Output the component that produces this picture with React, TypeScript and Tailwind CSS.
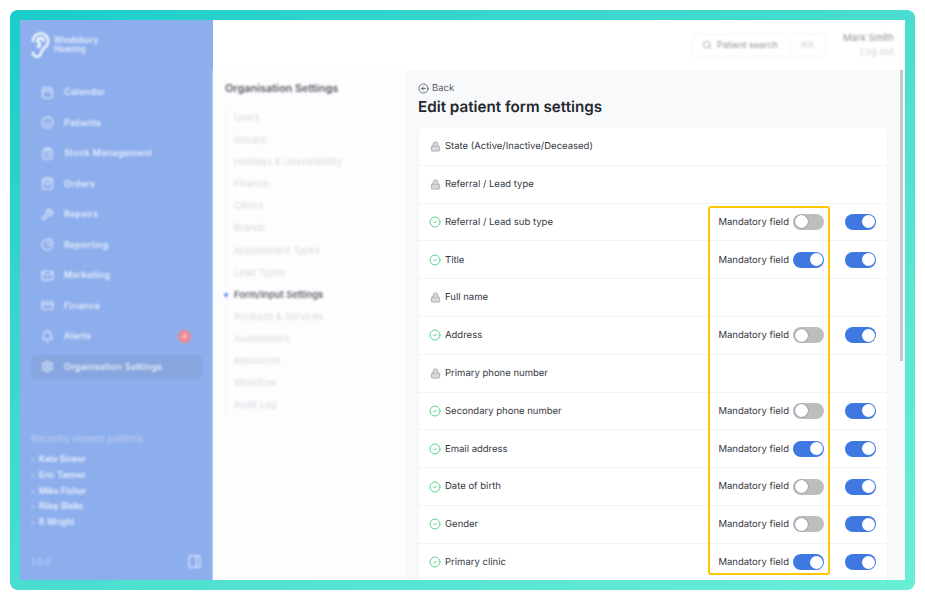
import React from 'react';
import {
  Bell,
  Calendar,
  CircleArrowLeft,
  CircleCheck,
  ClipboardList,
  CreditCard,
  Ear,
  Lock,
  Mail,
  PanelRight,
  PieChart,
  Search,
  Settings,
  ShoppingBag,
  Smile,
  Wrench,
} from 'lucide-react';

const navItems = [
  { label: 'Calendar', icon: Calendar },
  { label: 'Patients', icon: Smile },
  { label: 'Stock Management', icon: ClipboardList },
  { label: 'Orders', icon: ShoppingBag },
  { label: 'Repairs', icon: Wrench },
  { label: 'Reporting', icon: PieChart },
  { label: 'Marketing', icon: Mail },
  { label: 'Finance', icon: CreditCard },
  { label: 'Alerts', icon: Bell, badge: '4' },
  { label: 'Organisation Settings', icon: Settings, active: true },
];

const recentPatients = ['Kate Bower', 'Eric Tanner', 'Mike Fisher', 'Riley Blake', 'R Wright'];

const settingsLinks = [
  'Users',
  'Groups',
  'Holidays & Unavailability',
  'Finance',
  'Clinics',
  'Brands',
  'Appointment Types',
  'Lead Types',
  'Form/Input Settings',
  'Products & Services',
  'Audiometers',
  'Resources',
  'Workflow',
  'Audit Log',
];

const fields: { label: string; locked?: boolean; mandatory?: boolean }[] = [
  { label: 'State (Active/Inactive/Deceased)', locked: true },
  { label: 'Referral / Lead type', locked: true },
  { label: 'Referral / Lead sub type', mandatory: false },
  { label: 'Title', mandatory: true },
  { label: 'Full name', locked: true },
  { label: 'Address', mandatory: false },
  { label: 'Primary phone number', locked: true },
  { label: 'Secondary phone number', mandatory: false },
  { label: 'Email address', mandatory: true },
  { label: 'Date of birth', mandatory: false },
  { label: 'Gender', mandatory: false },
  { label: 'Primary clinic', mandatory: true },
];

const Toggle = ({ on }: { on: boolean }) => (
  <div
    className={`flex h-[16px] w-[31px] items-center rounded-full p-[1.5px] ${
      on ? 'justify-end bg-[#3f78e0]' : 'justify-start bg-[#bdbdbd]'
    }`}
  >
    <div className={`h-[13px] w-[13px] rounded-full bg-white ${on ? '' : 'shadow-[0_0_0_0.5px_#8a8a8a]'}`} />
  </div>
);

const Sidebar = () => (
  <aside className="flex w-[193px] shrink-0 flex-col bg-[#8daeed] text-white">
    <div className="flex h-[50px] shrink-0 items-center pl-[6px] blur-[1px]">
      <Ear size={28} strokeWidth={2} />
      <div className="text-[8.3px] font-semibold leading-[9px] text-white/80">
        Windsbury
        <br />
        Hearing
      </div>
    </div>
    <nav className="flex flex-col px-[11px] pt-[10px] blur-[1.2px]">
      {navItems.map((item) => (
        <div
          key={item.label}
          className={`mb-[6.5px] flex h-[24px] items-center gap-[10px] rounded pl-[10px] ${
            item.active ? 'bg-[#87a5de]' : ''
          }`}
        >
          <item.icon size={13} strokeWidth={2} className="shrink-0 text-white/80" />
          <span className="text-[9px] font-medium tracking-[0.3px] text-white/90">{item.label}</span>
          {item.badge && (
            <span className="ml-auto mr-[11px] flex h-[13px] w-[13px] items-center justify-center rounded-full bg-[#ef8a92] text-[6px]">
              {item.badge}
            </span>
          )}
        </div>
      ))}
    </nav>
    <div className="mt-[47px] pl-[11px] blur-[1.2px]">
      <div className="text-[9.5px] text-white/40">Recently viewed patients</div>
      <ul className="mt-[6px]">
        {recentPatients.map((name) => (
          <li key={name} className="h-[15.7px] text-[8.5px] font-semibold leading-[15.7px] text-white/80">
            <span className="mr-[4px]">-</span>
            {name}
          </li>
        ))}
      </ul>
    </div>
    <div className="mt-auto flex items-center justify-between pb-[11px] pl-[11px] pr-[11px] blur-[1px]">
      <span className="text-[9px] text-white/40">1.0.0</span>
      <PanelRight size={15} className="text-white/70" />
    </div>
  </aside>
);

const SettingsNav = () => (
  <div className="w-[193px] shrink-0 bg-[#fdfdfe] pl-[12px] pt-[12px] blur-[1.2px]">
    <h2 className="text-[10.9px] font-semibold leading-[13px] text-[#555b63]">Organisation Settings</h2>
    <ul className="relative ml-[1px] mt-[12px] border-l border-[#eef0f4] pb-[1px] pl-[7px]">
      {settingsLinks.map((link) => (
        <li
          key={link}
          className={`relative h-[22.1px] text-[9.35px] leading-[22.1px] ${
            link === 'Form/Input Settings' ? 'font-semibold text-[#5e636b]' : 'text-[#d5d8dd]'
          }`}
        >
          {link === 'Form/Input Settings' && (
            <span className="absolute left-[-10px] top-[9px] h-[4px] w-[4px] rounded-full bg-[#5a8cf0]" />
          )}
          {link}
        </li>
      ))}
    </ul>
  </div>
);

const FieldRow = ({ label, locked, mandatory }: { label: string; locked?: boolean; mandatory?: boolean }) => (
  <div className="flex h-[37.8px] shrink-0 items-center border-b border-[#f3f4f6] pl-[10px] pr-[11px]">
    {locked ? (
      <Lock size={11} strokeWidth={2} className="mx-[0.5px] shrink-0 fill-[#d5d7da] text-[#a9adb3]" />
    ) : (
      <CircleCheck size={12} strokeWidth={1.75} className="shrink-0 text-[#3ecf7a]" />
    )}
    <span className="ml-[4px] pt-[2px] text-[9.5px] text-[#33383f] [text-rendering:geometricPrecision]">{label}</span>
    {!locked && (
      <div className="ml-auto flex items-center">
        <span className="mr-[4px] pt-[2px] text-[9.5px] text-[#33383f] [text-rendering:geometricPrecision]">
          Mandatory field
        </span>
        <Toggle on={!!mandatory} />
        <div className="ml-[21px]">
          <Toggle on />
        </div>
      </div>
    )}
  </div>
);

export default function App() {
  return (
    <div className="h-[600px] w-[925px] overflow-hidden bg-white p-[10px] font-['Inter',sans-serif]">
      <div className="h-full rounded-[8px] bg-gradient-to-br from-[#17cdca] to-[#68eed6] p-[10px]">
        <div className="flex h-full overflow-hidden bg-white">
          <Sidebar />
          <div className="flex min-w-0 flex-1 flex-col">
            {/* Top bar */}
            <header className="flex h-[50px] shrink-0 items-center justify-end pr-[11px] blur-[1px]">
              <div className="flex h-[23px] w-[134px] items-center rounded border border-[#f3f4f6] pl-[9px]">
                <Search size={10} className="text-[#9a9ea5]" />
                <span className="ml-[5px] text-[9px] text-[#8f9399]">Patient search</span>
                <span className="ml-[11px] flex h-full flex-1 items-center justify-center border-l border-[#f3f4f6] text-[8.5px] text-[#d0d3d8]">
                  ⌘K
                </span>
              </div>
              <div className="ml-[17px] text-right text-[9.5px] leading-[14px]">
                <div className="text-[#8a8e94]">Mark Smith</div>
                <div className="text-[#cfd2d6]">Log out</div>
              </div>
            </header>
            <div className="flex min-h-0 flex-1">
              <SettingsNav />
              {/* Form settings */}
              <main className="relative min-w-0 flex-1 overflow-hidden bg-[#f8f9fb] pl-[12px] pr-[18px] pt-[11px]">
                <div className="flex items-center gap-[3px] text-[9.5px] leading-[12px] text-[#5a6068] [text-rendering:geometricPrecision]">
                  <CircleArrowLeft size={11} strokeWidth={1.75} className="text-[#4b5159]" />
                  <span className="pt-[2px]">Back</span>
                </div>
                <h1 className="mt-[1px] text-[15.2px] font-semibold leading-[22px] text-[#24282e] [text-rendering:geometricPrecision]">
                  Edit patient form settings
                </h1>
                <section className="relative ml-[1px] mt-[10px] rounded-t-[4px] bg-white shadow-[0_0_3px_rgba(0,0,0,0.04)]">
                  <div className="flex flex-col">
                    {fields.map((field) => (
                      <FieldRow key={field.label} {...field} />
                    ))}
                  </div>
                  {/* highlight round the mandatory switches */}
                  <div className="absolute left-[289px] top-[78px] h-[369px] w-[122px] rounded-[3px] border-2 border-[#fdc800]" />
                </section>
                <div className="absolute right-[2px] top-0 h-[291px] w-[3px] bg-[#c6c7c9]" />
              </main>
            </div>
          </div>
        </div>
      </div>
    </div>
  );
}
